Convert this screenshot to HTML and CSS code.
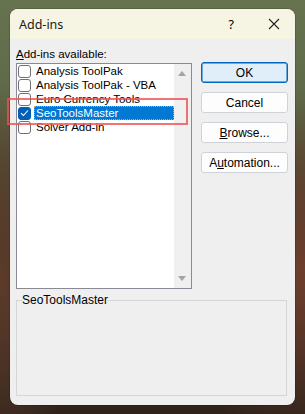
FILE: index.html
```html
<!DOCTYPE html>
<html lang="en">
<head>
  <meta charset="UTF-8" />
  <title>Add-ins</title>
  <link rel="stylesheet" href="styles.css">
</head>
<body>
  <div class="dialog">
    <div class="titlebar">
      <span class="title">Add-ins</span>
      <span class="help">?</span>
      <svg class="close" width="12" height="12" viewBox="0 0 12 12"><path d="M1 1L11 11M11 1L1 11" stroke="#222" stroke-width="1.1" fill="none"/></svg>
    </div>

    <div class="content">
      <div class="label"><u>A</u>dd-ins available:</div>
      <div class="main">
        <div class="listbox">
          <ul class="items">
            <li><span class="check"></span><span class="name">Analysis ToolPak</span></li>
            <li><span class="check"></span><span class="name">Analysis ToolPak - VBA</span></li>
            <li><span class="check"></span><span class="name">Euro Currency Tools</span></li>
            <li class="selected"><span class="check checked"><svg width="9" height="8" viewBox="0 0 9 8"><path d="M1 4.2L3.4 6.5L8 1.5" stroke="#fff" stroke-width="1.1" fill="none"/></svg></span><span class="name">SeoToolsMaster</span></li>
            <li><span class="check"></span><span class="name">Solver Add-in</span></li>
          </ul>
          <div class="scrollbar">
            <span class="arrow up"></span>
            <span class="arrow down"></span>
          </div>
        </div>

        <div class="buttons">
          <button class="btn default">OK</button>
          <button class="btn">Cancel</button>
          <button class="btn"><u>B</u>rowse...</button>
          <button class="btn">A<u>u</u>tomation...</button>
        </div>
      </div>

      <fieldset class="details">
        <legend>SeoToolsMaster</legend>
      </fieldset>
    </div>

    <div class="highlight"></div>
  </div>
</body>
</html>
```

FILE: styles.css
```css
body {
  margin: 0;
  width: 305px;
  height: 414px;
  overflow: hidden;
  font-family: "Liberation Sans", Arial, sans-serif;
  font-size: 11.5px;
  color: #000;
  background:
    radial-gradient(ellipse 150px 170px at 305px 270px, #6e3e2c, transparent),
    radial-gradient(ellipse 80px 200px at 0px 280px, #5c3b2a, transparent),
    linear-gradient(180deg, #67734f 0%, #5f6a49 22%, #4f4a35 42%, #3d2c22 72%, #2e221b 100%);
}
.dialog {
  position: relative;
  margin: 9px 0 0 10px;
  width: 285px;
  height: 396px;
  border-radius: 8px;
  background: #efefef;
  box-shadow: 0 0 0 1px rgba(0,0,0,0.15);
}
.titlebar {
  display: flex;
  align-items: center;
  height: 30px;
  background: #f6f4e2;
  border-radius: 8px 8px 0 0;
  padding: 0 15px 0 9px;
}
.title {
  flex: 1;
  font-family: "Noto Sans", "Open Sans", sans-serif;
  font-size: 12.5px;
  color: #1a1a1a;
}
.help {
  font-family: "Noto Sans", sans-serif;
  font-size: 12.5px;
  margin-right: 34px;
}
.content {
  padding: 0 7px 9px 6px;
}
.label {
  height: 24px;
  line-height: 24px;
  padding-top: 3px;
  box-sizing: border-box;
}
.main {
  display: flex;
  gap: 9px;
}
.listbox {
  position: relative;
  width: 176px;
  height: 226px;
  box-sizing: border-box;
  border: 1px solid #8a8a94;
  background: #fff;
}
.items {
  list-style: none;
  margin: 0;
  padding: 0 0 0 1px;
}
.items li {
  display: flex;
  align-items: center;
  height: 14px;
}
.check {
  display: flex;
  align-items: center;
  justify-content: center;
  width: 11px;
  height: 11px;
  margin-right: 3px;
  border: 1px solid #707070;
  border-radius: 3px;
  background: #fff;
}
.check.checked {
  background: #005fb8;
  border-color: #005fb8;
}
.name {
  padding: 0 1px;
  height: 14px;
  width: 140px;
  box-sizing: border-box;
  border: 1px solid transparent;
  line-height: 12px;
}
.selected .name {
  background: #0078d4;
  color: #fff;
  border: 1px dotted #f0a030;
}
.scrollbar {
  position: absolute;
  top: 0;
  right: 0;
  bottom: 0;
  width: 17px;
  background: #f0f0f0;
}
.arrow {
  position: absolute;
  left: 4px;
  width: 0;
  height: 0;
  border-left: 4px solid transparent;
  border-right: 4px solid transparent;
}
.arrow.up {
  top: 7px;
  border-bottom: 5px solid #a3a3a3;
}
.arrow.down {
  bottom: 7px;
  border-top: 5px solid #a3a3a3;
}
.buttons {
  display: flex;
  flex-direction: column;
  gap: 9px;
  margin-top: -1px;
}
.btn {
  width: 87px;
  height: 21px;
  padding: 0;
  font-family: inherit;
  font-size: 12px;
  color: #000;
  background: #fdfdfd;
  border: 1px solid #cfd3d9;
  border-radius: 3px;
}
.btn.default {
  background: #e0eef9;
  border: 1px solid #0067c0;
  box-shadow: inset 0 0 0 0.5px #0067c0;
}
.details {
  margin: 4px 1px 0 0;
  padding: 0 5px;
  height: 103px;
  box-sizing: border-box;
  border: 1px solid #d6d6d6;
}
.details legend {
  padding: 0;
  font-size: 12px;
}
.highlight {
  position: absolute;
  left: -3px;
  top: 89px;
  width: 177px;
  height: 23px;
  border: 2px solid rgba(238, 80, 80, 0.8);
}
```
